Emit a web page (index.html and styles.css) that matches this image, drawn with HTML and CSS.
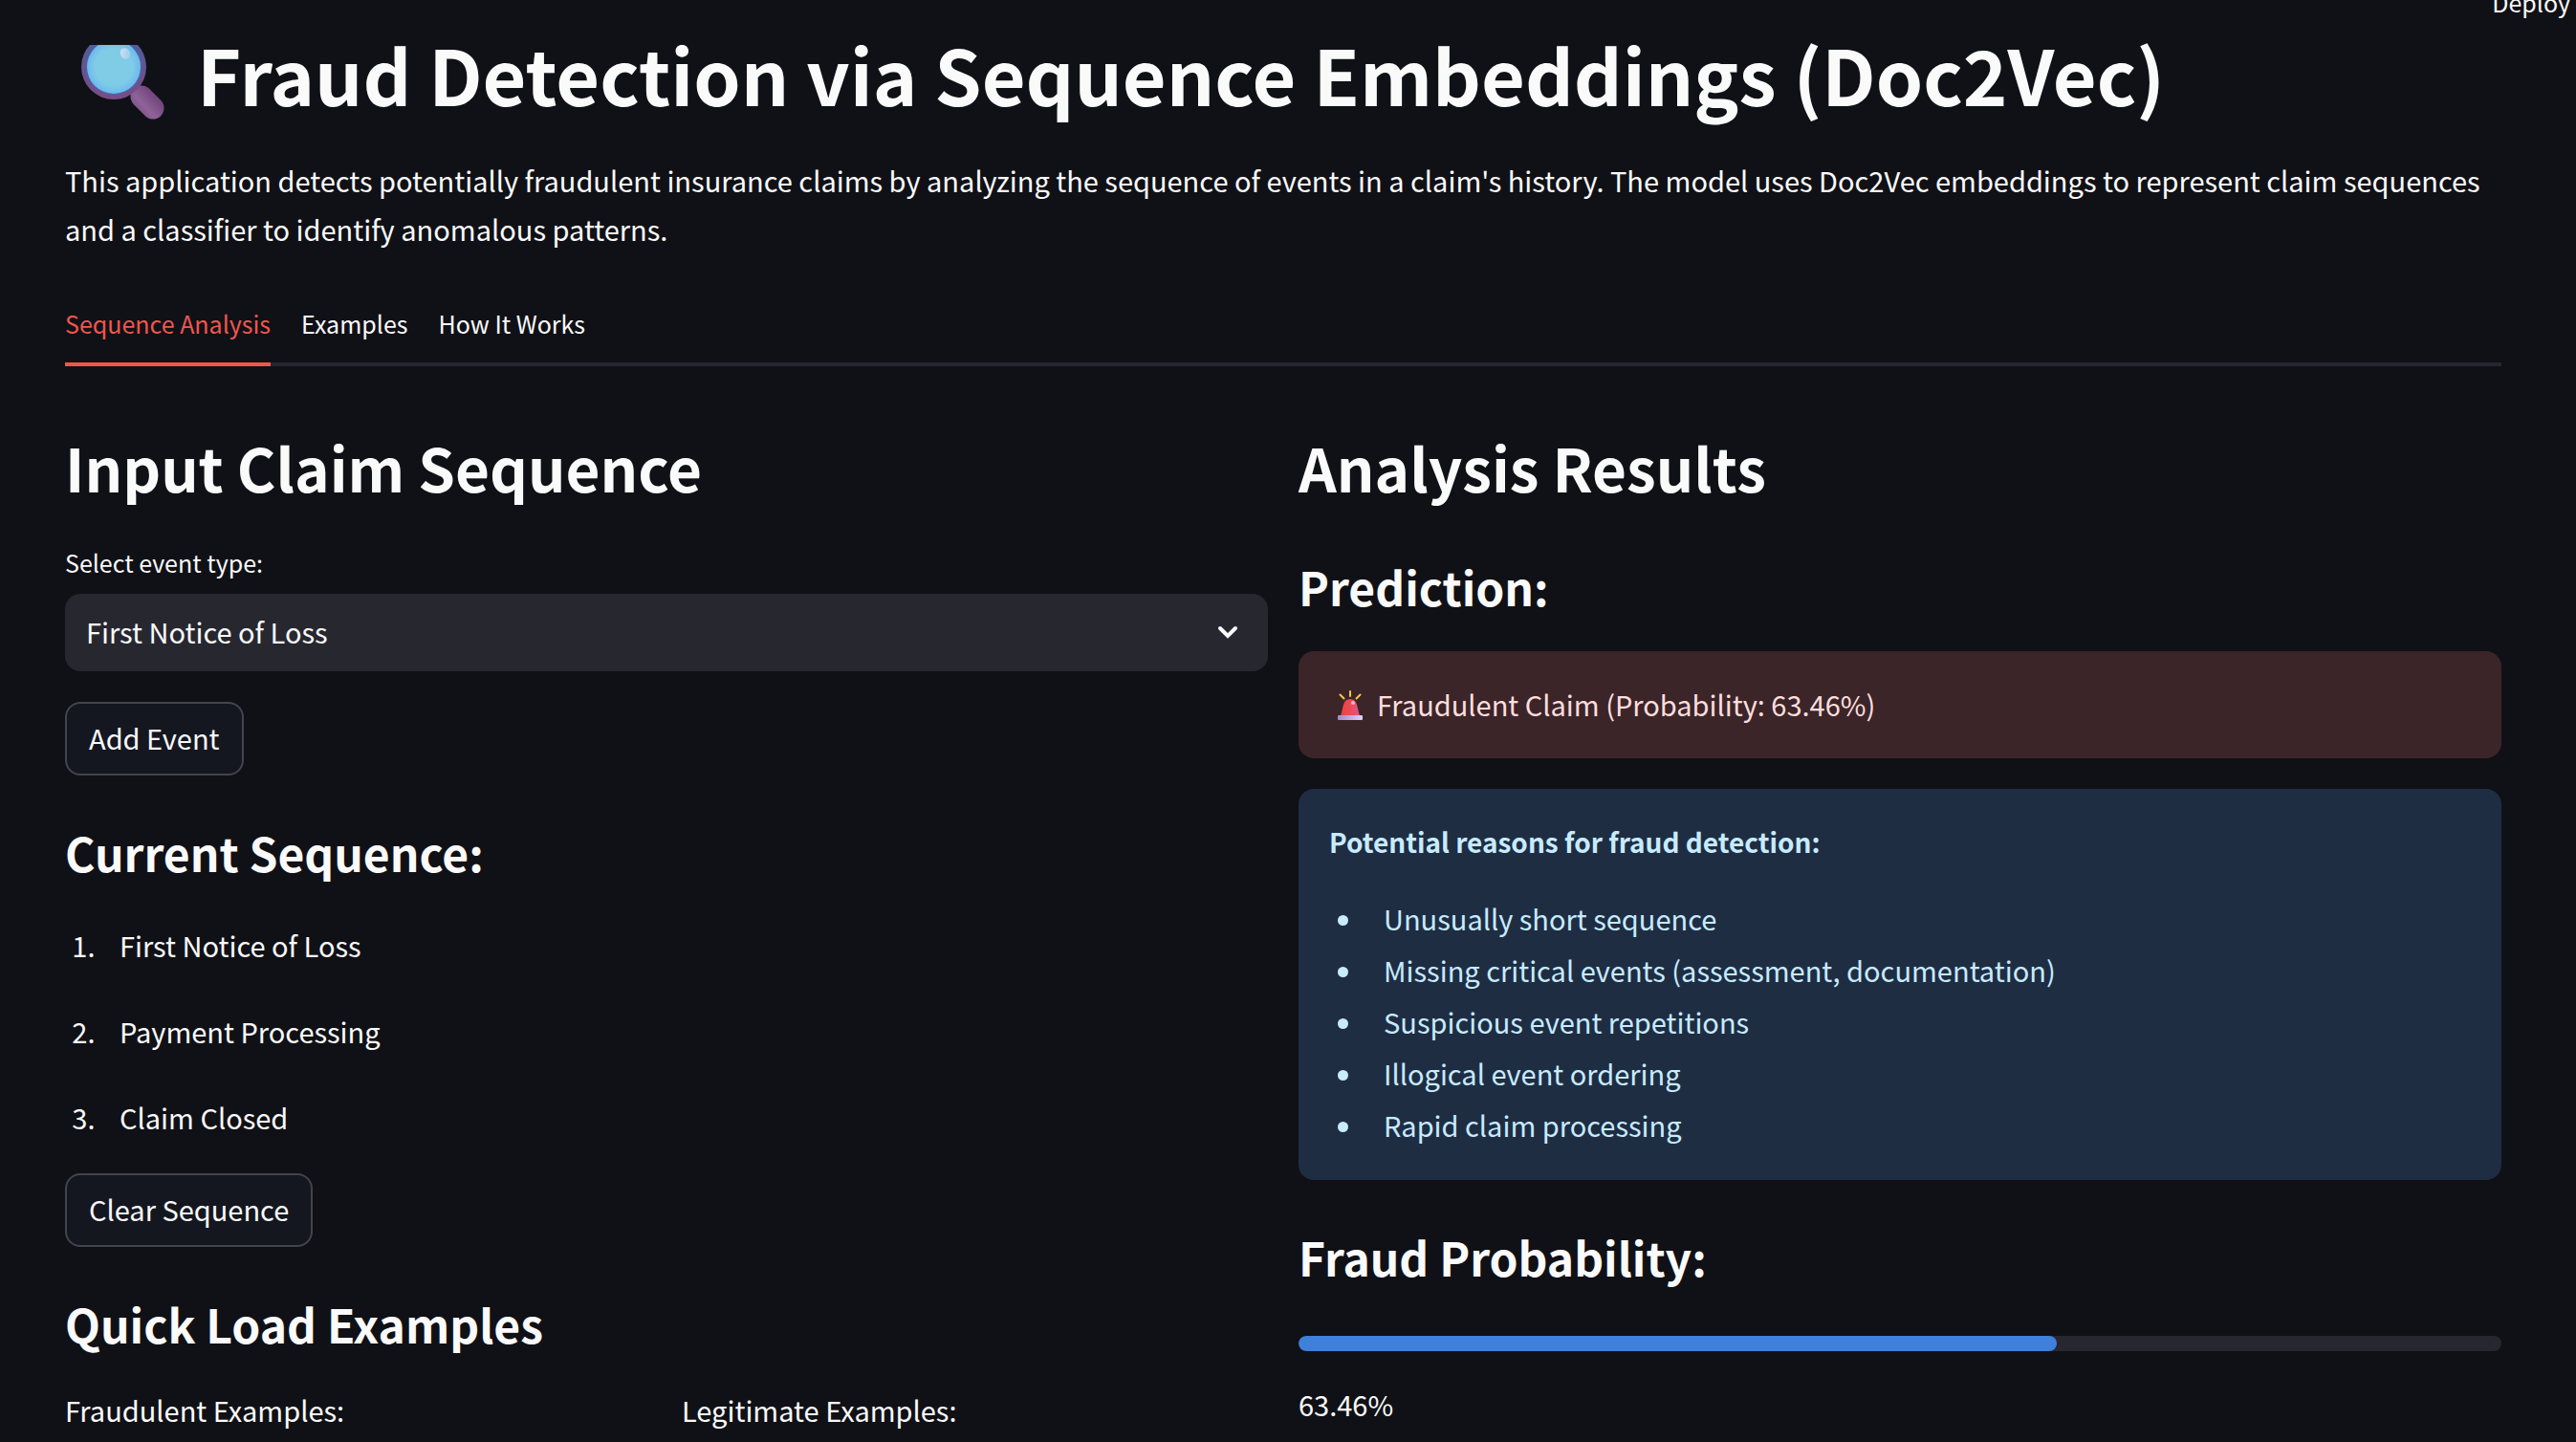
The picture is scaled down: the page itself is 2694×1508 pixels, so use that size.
FILE: index.html
```html
<!DOCTYPE html>
<html lang="en">
<head>
<meta charset="utf-8">
<meta name="viewport" content="width=device-width, initial-scale=1">
<title>Fraud Detection via Sequence Embeddings</title>
<link rel="stylesheet" href="styles.css">
</head>
<body>
<header class="topbar"><button class="deploy" type="button">Deploy</button></header>
<main class="page">
  <h1 class="title">
    <svg class="lens" viewBox="0 0 108 78" aria-hidden="true">
      <defs>
        <linearGradient id="rim" x1="0" y1="0" x2="0" y2="1">
          <stop offset="0" stop-color="#4a5f9c"/><stop offset="1" stop-color="#7a4c86"/>
        </linearGradient>
        <radialGradient id="glass">
          <stop offset="0.7" stop-color="#80cbe6"/><stop offset="1" stop-color="#6bb9f0"/>
        </radialGradient>
        <linearGradient id="grip" gradientUnits="userSpaceOnUse" x1="76" y1="68" x2="96" y2="50">
          <stop offset="0" stop-color="#7d5589"/><stop offset="0.3" stop-color="#8f6398"/><stop offset="1" stop-color="#6c3f78"/>
        </linearGradient>
        <linearGradient id="shine" x1="0" y1="0" x2="1" y2="1">
          <stop offset="0" stop-color="#dcdff6"/><stop offset="1" stop-color="#8fcdea"/>
        </linearGradient>
      </defs>
      <path d="M80 54l12 12" stroke="url(#grip)" stroke-width="23" stroke-linecap="round"/>
      <circle cx="51" cy="23" r="34" fill="url(#rim)"/>
      <circle cx="51" cy="23" r="29" fill="#4c66a8"/>
      <circle cx="51" cy="23" r="28" fill="url(#glass)"/>
      <ellipse cx="63" cy="9" rx="5" ry="6" fill="url(#shine)" transform="rotate(-30 63 9)"/>
    </svg>
    <span>Fraud Detection via Sequence Embeddings (Doc2Vec)</span>
  </h1>
  <p class="intro">This application detects potentially fraudulent insurance claims by analyzing the sequence of events in a claim's history. The model uses Doc2Vec embeddings to represent claim sequences and a classifier to identify anomalous patterns.</p>
  <nav class="tabs">
    <a class="tab tab-active" href="#analysis">Sequence Analysis</a>
    <a class="tab" href="#examples">Examples</a>
    <a class="tab" href="#how">How It Works</a>
  </nav>
  <div class="columns" id="analysis">
    <section>
      <h2 class="heading">Input Claim Sequence</h2>
      <label class="label" for="event">Select event type:</label>
      <div class="select-wrap">
        <select class="select" id="event"><option>First Notice of Loss</option><option>Payment Processing</option><option>Claim Closed</option></select>
        <svg class="chevron" viewBox="0 0 24 24" aria-hidden="true"><path d="M4 8l8 8 8-8"/></svg>
      </div>
      <button class="button" type="button">Add Event</button>
      <h3 class="subheading">Current Sequence:</h3>
      <ol class="sequence">
        <li>First Notice of Loss</li>
        <li>Payment Processing</li>
        <li>Claim Closed</li>
      </ol>
      <button class="button" type="button">Clear Sequence</button>
      <h3 class="subheading">Quick Load Examples</h3>
      <div class="quick"><p>Fraudulent Examples:</p><p>Legitimate Examples:</p></div>
    </section>
    <section>
      <h2 class="heading">Analysis Results</h2>
      <h3 class="subheading subheading-first">Prediction:</h3>
      <div class="alert alert-error">
        <svg class="siren" viewBox="0 0 42 36" aria-hidden="true">
          <defs>
            <linearGradient id="lamp"><stop offset="0" stop-color="#e8453c"/><stop offset="0.5" stop-color="#ef4a55"/><stop offset="1" stop-color="#dd5590"/></linearGradient>
            <linearGradient id="base"><stop offset="0" stop-color="#a18cc4"/><stop offset="1" stop-color="#ddd2f3"/></linearGradient>
          </defs>
          <path d="M22 4v5M11.500 7.500l4 4M32.500 7.500l-4 4" stroke="#f6c945" stroke-width="2" stroke-linecap="round"/>
          <path d="M12 30l3-12q1.500-6 7-6t7 6l3 12z" fill="url(#lamp)"/>
          <circle cx="25" cy="16" r="2" fill="#fbb3bd"/>
          <rect x="9" y="29" width="26" height="5" rx="1" fill="url(#base)"/>
        </svg>
        <span>Fraudulent Claim (Probability: 63.46%)</span>
      </div>
      <div class="alert alert-info">
        <p class="reason-title">Potential reasons for fraud detection:</p>
        <ul class="reasons">
          <li>Unusually short sequence</li>
          <li>Missing critical events (assessment, documentation)</li>
          <li>Suspicious event repetitions</li>
          <li>Illogical event ordering</li>
          <li>Rapid claim processing</li>
        </ul>
      </div>
      <h3 class="subheading" id="probability">Fraud Probability:</h3>
      <progress class="meter" max="100" value="63" aria-labelledby="probability"></progress>
      <p class="percent">63.46%</p>
    </section>
  </div>
</main>
</body>
</html>
```
FILE: styles.css
```css
* { box-sizing: border-box; margin: 0; padding: 0; }

body {
  background: #101116;
  color: #fafafa;
  font-family: "Noto Sans CJK SC", "Noto Sans", sans-serif;
  font-size: 29px;
  line-height: 51px;
}

button, select { font: inherit; color: inherit; }

/* Top bar */
.topbar { display: flex; justify-content: flex-end; align-items: flex-start; height: 47px; padding-right: 6px; }
.deploy { margin-top: -18px; border: 0; background: none; font-size: 25px; line-height: 40px; }

.page { padding: 0 78px 8px 68px; }

/* Title block */
.title { display: flex; align-items: flex-start; gap: 30px; font-size: 79px; font-weight: 700; line-height: 60px; }
.lens { flex: none; width: 108px; height: 78px; }
.intro { margin-top: 38px; }

/* Tabs */
.tabs { display: flex; gap: 32px; margin-top: 53px; border-bottom: 4px solid #26272e; font-size: 25px; line-height: 40px; }
.tab { margin-bottom: -4px; padding-bottom: 21px; border-bottom: 4px solid transparent; color: inherit; text-decoration: none; }
.tab-active { border-color: #f0564e; color: #f0564e; }

/* Columns */
.columns { display: grid; grid-template-columns: 1fr 1fr; gap: 32px; margin-top: 67px; }
.heading { font-size: 62px; font-weight: 600; line-height: 76px; }
.subheading { margin-top: 51px; font-size: 48px; font-weight: 600; line-height: 58px; }
.subheading-first { margin-top: 58px; }

/* Event form */
.label { display: block; margin-top: 42px; font-size: 25px; line-height: 40px; }
.select-wrap { position: relative; margin: 13px 0 32px; }
.select { display: block; width: 100%; height: 81px; padding: 0 22px 2px; border: 0; border-radius: 16px; background: #272730; appearance: none; }
.chevron { position: absolute; top: 28px; right: 30px; width: 24px; fill: none; stroke: #fafafa; stroke-width: 4; stroke-linecap: round; }
.button { display: block; height: 77px; padding: 0 23px 3px; border: 2px solid #43444c; border-radius: 16px; background: #141720; }

/* Sequence list */
.sequence { display: grid; gap: 39px; margin: 43px 0 33px; padding-left: 38px; }
.sequence li { padding-left: 19px; }
.quick { display: grid; grid-template-columns: 1fr 1fr; gap: 32px; margin-top: 36px; }

/* Result boxes */
.alert { padding: 30px 32px 31px; border-radius: 16px; }
.alert-error { display: flex; align-items: center; gap: 8px; margin-top: 39px; background: #3b2529; color: #ffdede; }
.siren { width: 42px; height: 36px; }
.alert-info { margin-top: 32px; background: #1f2d43; color: #c7ebff; }
.reason-title { font-size: 28px; font-weight: 600; }
.reasons { margin-top: 27px; padding-left: 38px; line-height: 54px; }
.reasons li { padding-left: 19px; }

/* Probability bar */
.meter { display: block; width: 100%; height: 16px; margin-top: 54px; border: 0; border-radius: 8px; background: #272730; appearance: none; overflow: hidden; }
.meter::-webkit-progress-bar { background: #272730; }
.meter::-webkit-progress-value { border-radius: 8px; background: #3f80dc; }
.percent { margin-top: 30px; }
```
